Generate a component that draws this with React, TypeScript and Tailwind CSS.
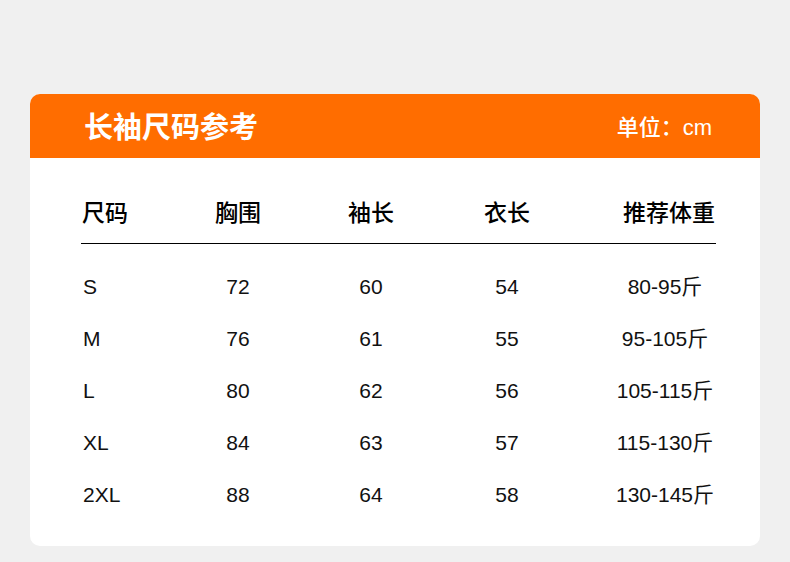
import React from 'react';

// Size chart data
const rows = [
    { size: 'S', chest: '72', sleeve: '60', length: '54', weight: '80-95斤' },
    { size: 'M', chest: '76', sleeve: '61', length: '55', weight: '95-105斤' },
    { size: 'L', chest: '80', sleeve: '62', length: '56', weight: '105-115斤' },
    { size: 'XL', chest: '84', sleeve: '63', length: '57', weight: '115-130斤' },
    { size: '2XL', chest: '88', sleeve: '64', length: '58', weight: '130-145斤' },
];

const font = { fontFamily: '"Liberation Sans", "Noto Sans CJK SC", sans-serif' };
const cols = 'grid grid-cols-[98px_118px_148px_124px_46px_100px] items-center';

export default function App() {
    return (
        <div className="w-[790px] h-[562px] bg-[#f0f0f0] pt-[94px] px-[30px]" style={font}>
            <div className="bg-white rounded-[10px] overflow-hidden">
                {/* Orange title bar */}
                <div className="h-[64px] bg-[#ff6d00] flex items-center justify-between pl-[54px] pr-[48px] text-white">
                    <h1 className="text-[29px] font-bold leading-none mt-[4px]">长袖尺码参考</h1>
                    <span className="text-[22px] font-medium leading-none mt-[3px]">单位：cm</span>
                </div>

                <div className="pl-[51px] pr-[44px] pb-[25px]">
                    {/* Column headers */}
                    <div className={`${cols} pt-[39px] pb-[14px] border-b border-black text-[23px] font-medium leading-[32px] text-black`}>
                        <span className="pl-px">尺码</span>
                        <span className="text-center">胸围</span>
                        <span className="text-center">袖长</span>
                        <span className="text-center">衣长</span>
                        <span />
                        <span className="text-right whitespace-nowrap">推荐体重</span>
                    </div>

                    {/* Data rows */}
                    <div className="pt-[17px]">
                        {rows.map((r) => (
                            <div key={r.size} className={`${cols} h-[52px] text-[21px] text-[#111]`}>
                                <span className="pl-[2px]">{r.size}</span>
                                <span className="text-center">{r.chest}</span>
                                <span className="text-center">{r.sleeve}</span>
                                <span className="text-center">{r.length}</span>
                                <span />
                                <span className="text-center whitespace-nowrap">{r.weight}</span>
                            </div>
                        ))}
                    </div>
                </div>
            </div>
        </div>
    );
}
